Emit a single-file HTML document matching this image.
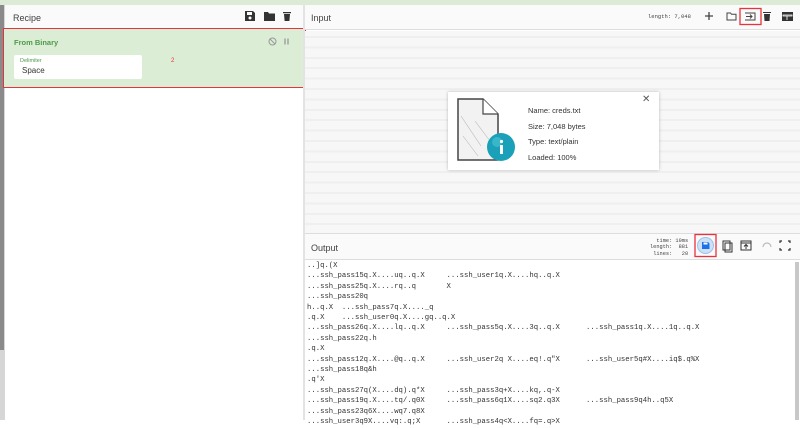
<!DOCTYPE html>
<html><head><style>
*{box-sizing:border-box;margin:0;padding:0}
body{width:800px;height:420px;overflow:hidden;background:#fff;font-family:"Liberation Sans",sans-serif;position:relative}
.abs{position:absolute}
.hdr{font-size:9px;color:#424242}
.blur{background:#f6f6f6;background-image:repeating-linear-gradient(180deg,#f7f7f7 0 5px,#efefef 5px 7px,#f7f7f7 7px 10.4px)}
pre{font-family:"Liberation Mono",monospace;font-size:7.27px;line-height:10.4px;color:#333;tab-size:8}
</style></head><body>
<div class="abs" style="left:0;top:0;width:800px;height:5px;background:#dcebd6"></div>
<div class="abs" style="left:0;top:5px;width:5px;height:415px;background:#d6d6d6"></div>
<div class="abs" style="left:0;top:5px;width:4px;height:345px;background:#8a8a8a"></div>
<!-- recipe -->
<div class="abs" style="left:5px;top:5px;width:298px;height:24px;background:#fafafa;border-bottom:1px solid #ddd"></div>
<div class="abs hdr" style="left:13px;top:13px">Recipe</div>
<svg class="abs" style="left:245px;top:10px" width="50" height="12" viewBox="0 0 50 12">
<path d="M0 1h8l2 2v8H0z M2 2v3h5V2z" fill="#333" fill-rule="evenodd"/><circle cx="5" cy="8" r="1.5" fill="#fff"/>
<path d="M19 2h4l1 1.5h6V11H19z" fill="#333"/>
<path d="M38 2h8v1.2h-8z M39 4h6l-.6 7h-4.8z" fill="#333"/>
</svg>
<div class="abs" style="left:3px;top:28px;width:303px;height:60px;background:#dcedd5;border:1.5px solid #e8333c"></div>
<div class="abs" style="left:14px;top:38px;font-size:7.5px;font-weight:bold;color:#4d9a4a">From Binary</div>
<svg class="abs" style="left:268px;top:37px" width="25" height="9"><circle cx="4.5" cy="4.5" r="3.5" fill="none" stroke="#999" stroke-width="1"/><path d="M2 2l5 5" stroke="#999"/><path d="M17 1.5v6M20 1.5v6" stroke="#999" stroke-width="1.3"/></svg>
<div class="abs" style="left:14px;top:55px;width:128px;height:24px;background:#fff;border-radius:2px"></div>
<div class="abs" style="left:20px;top:58px;font-size:5.5px;color:#4d9a4a">Delimiter</div>
<div class="abs" style="left:22px;top:66px;font-size:8px;color:#333">Space</div>
<div class="abs" style="left:171px;top:58px;font-size:6px;color:#e8333c">2</div>
<div class="abs" style="left:303px;top:5px;width:2px;height:415px;background:#e3e3e3"></div>
<!-- input -->
<div class="abs" style="left:305px;top:5px;width:495px;height:25px;background:#fafafa;border-bottom:1px solid #ddd"></div>
<div class="abs hdr" style="left:311px;top:13px">Input</div>
<div class="abs" style="left:648px;top:13px;font-family:'Liberation Mono',monospace;font-size:5.5px;color:#444">length: 7,048</div>
<svg class="abs" style="left:700px;top:5px" width="100" height="24" viewBox="-4 -4 100 24">
<path d="M5 3v8M1 7h8" stroke="#444" stroke-width="1.3"/>
<path d="M23 4h3.5l1 1.3H32V11H23z" fill="none" stroke="#444" stroke-width="1"/>
<rect x="36" y="-0.5" width="21" height="16" fill="none" stroke="#e8333c" stroke-width="1.3"/>
<path d="M41 4h10v7H41" fill="none" stroke="#444" stroke-width="1"/><path d="M42 7.5h6M46 5.5l2 2-2 2" fill="none" stroke="#444"/>
<path d="M59 3h8v1h-8z M60 5h6l-.5 7h-5z" fill="#333"/>
<path d="M78 3h11v9H78z" fill="#333"/><path d="M79 6h9v1H79zM83 7v4" stroke="#fff" stroke-width=".8"/>
</svg>
<div class="abs" style="left:750px;top:39px;font-size:5.5px;color:#e8333c">1</div>
<div class="abs blur" style="left:305px;top:31px;width:495px;height:202px"></div>
<!-- popup -->
<div class="abs" style="left:448px;top:92px;width:211px;height:78px;background:#fff;box-shadow:0 0 3px rgba(0,0,0,.25)"></div>
<svg class="abs" style="left:455px;top:96px" width="65" height="70" viewBox="0 0 65 70">
<path d="M3 3h25l15 15v46H3z" fill="#f2f2f2" stroke="#444" stroke-width="1.5"/><path d="M28 3v15h15" fill="#fff" stroke="#444" stroke-width="1.2"/>
<path d="M6 20l20 30M8 40l15 20M20 25l15 20" stroke="#bbb" stroke-width=".6"/>
<circle cx="46" cy="51" r="14" fill="#1aa0b8"/><circle cx="42" cy="46" r="5" fill="#4fc4d6" opacity=".6"/>
<rect x="45" y="49" width="3" height="9" fill="#fff"/><circle cx="46.5" cy="45.5" r="1.6" fill="#fff"/>
</svg>
<div class="abs" style="left:528px;top:103px;font-size:7.5px;color:#333;line-height:15.6px">Name: creds.txt<br>Size: 7,048 bytes<br>Type: text/plain<br>Loaded: 100%</div>
<div class="abs" style="left:642px;top:94px;font-size:10px;color:#555">✕</div>
<!-- output -->
<div class="abs" style="left:305px;top:233px;width:495px;height:27px;background:#fafafa;border-top:1px solid #ddd;border-bottom:1px solid #ddd"></div>
<div class="abs hdr" style="left:311px;top:243px">Output</div>
<div class="abs" style="left:650px;top:238px;font-family:'Liberation Mono',monospace;font-size:5.3px;line-height:6.3px;color:#444;text-align:right;white-space:pre">time: 10ms
length:  881
lines:   20</div>
<svg class="abs" style="left:694px;top:233px" width="106" height="28" viewBox="0 0 106 28">
<rect x="1" y="1.5" width="21" height="22" fill="none" stroke="#e8333c" stroke-width="1.3"/>
<circle cx="11.5" cy="12.5" r="8" fill="#cde0f5" stroke="#9cc2ea"/>
<path d="M8 9h6l1.5 1.5V16H8z" fill="#1a73e8"/><rect x="9.5" y="9.5" width="4" height="2" fill="#fff"/>
<path d="M29 8h7v9h-7z M31 10h7v9h-7z" fill="none" stroke="#333" stroke-width="1"/>
<path d="M47 8h10v9H47zM47 10h10" fill="none" stroke="#333" stroke-width="1"/><path d="M52 16v-4M50 13.5l2-2 2 2" fill="none" stroke="#333"/>
<path d="M69 14a4 4 0 0 1 8 0" fill="none" stroke="#bbb" stroke-width="1.2"/>
<path d="M88 8h-2v2M94 8h2v2M88 17h-2v-2M94 17h2v-2" fill="none" stroke="#333" stroke-width="1.2"/>
</svg>
<div class="abs" style="left:795px;top:262px;width:4px;height:158px;background:#c8c8c8"></div>
<pre class="abs" style="left:307px;top:261px">..]q.(X
...ssh_pass15q.X....uq..q.X	...ssh_user1q.X....hq..q.X
...ssh_pass25q.X....rq..q	X
...ssh_pass20q
h..q.X	...ssh_pass7q.X...._q
.q.X	...ssh_user0q.X....gq..q.X
...ssh_pass26q.X....lq..q.X	...ssh_pass5q.X....3q..q.X	...ssh_pass1q.X....1q..q.X
...ssh_pass22q.h
.q.X
...ssh_pass12q.X....@q..q.X	...ssh_user2q X....eq!.q"X	...ssh_user5q#X....iq$.q%X
...ssh_pass18q&amp;h
.q'X
...ssh_pass27q(X....dq).q*X	...ssh_pass3q+X....kq,.q-X
...ssh_pass19q.X....tq/.q0X	...ssh_pass6q1X....sq2.q3X	...ssh_pass9q4h..q5X
...ssh_pass23q6X....wq7.q8X
...ssh_user3q9X....vq:.q;X	...ssh_pass4q&lt;X....fq=.q&gt;X</pre>
</body></html>
